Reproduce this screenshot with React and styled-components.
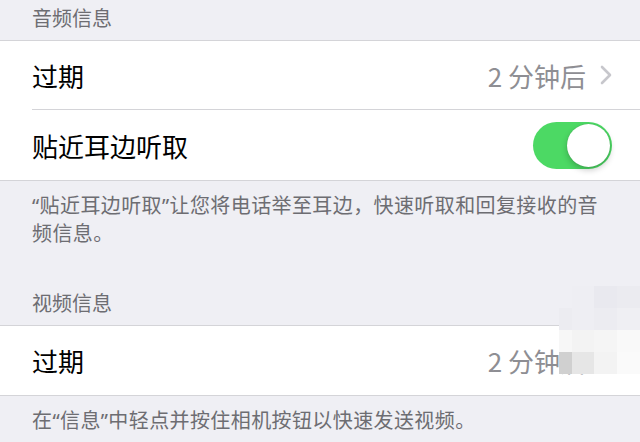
import React from "react"
import styled, { createGlobalStyle } from "styled-components"

const Global = createGlobalStyle`
  html, body { margin: 0; padding: 0; background: #efeff4; }
  body { font-family: "Noto Sans CJK SC", "Noto Sans", sans-serif; }
`;

const Page = styled.div`
  position: relative;
  width: 640px;
  height: 442px;
  overflow: hidden;
  background: #efeff4;
`;

const Header = styled.div`
  padding: ${p => p.$top}px 32px 10px;
  font-size: 20px;
  line-height: 24px;
  color: #6d6d72;
`;

const Group = styled.div`
  background: #fff;
  border-top: 1px solid #d4d4d8;
  border-bottom: 1px solid #d4d4d8;
`;

const Row = styled.div`
  height: ${p => p.$h}px;
  margin-left: 32px;
  padding-right: 28px;
  display: flex;
  align-items: center;
  justify-content: space-between;
  & + & {
    border-top: 1px solid #d4d4d8;
  }
`;

const Title = styled.span`
  font-size: 26px;
  color: #000;
`;

const Value = styled.span`
  display: flex;
  align-items: center;
  gap: 14px;
  font-size: 26px;
  color: #8e8e93;
`;

const Footer = styled.div`
  padding: 11px 32px 0;
  font-family: "Noto Sans", "Noto Sans CJK SC", sans-serif;
  font-size: 20px;
  letter-spacing: 0.4px;
  line-height: 28px;
  color: #6d6d72;
`;

const Toggle = styled.div`
  position: relative;
  width: 79px;
  height: 47px;
  border-radius: 24px;
  background: #4cd964;
`;

const Knob = styled.div`
  position: absolute;
  top: 2px;
  right: 2px;
  width: 43px;
  height: 43px;
  border-radius: 50%;
  background: #fff;
  box-shadow: 0 3px 6px rgba(0, 0, 0, 0.22), 0 0 1px rgba(0, 0, 0, 0.2);
`;

const Mosaic = styled.div`
  position: absolute;
  left: 559px;
  top: 286px;
  display: grid;
  grid-template-columns: 13px 22px 23px 23px;
  grid-auto-rows: 22px;
`;

const Cell = styled.div`
  background: ${p => p.$c};
`;

const Chevron = () => (
  <svg width="12" height="20" viewBox="0 0 12 20">
    <path d="M2 2l8 8-8 8" fill="none" stroke="#c7c7cc" strokeWidth="2.6" strokeLinecap="round" strokeLinejoin="round" />
  </svg>
)

const mosaic = [
  "transparent", "#eeeef3", "#e9e9ef", "#ebebf0",
  "#ececf1", "#eeeef3", "#ececf1", "#efeff3",
  "#f7f7f7", "#f3f3f3", "#f5f5f5", "#f9f9f9",
  "#d0d0d0", "#e6e6e6", "#f3f3f3", "#fafafa",
]

export default function App() {
  return (
    <Page>
      <Global />
      <Header $top={6}>音频信息</Header>
      <Group>
        <Row $h={68}>
          <Title>过期</Title>
          <Value>2 分钟后 <Chevron /></Value>
        </Row>
        <Row $h={70}>
          <Title>贴近耳边听取</Title>
          <Toggle><Knob /></Toggle>
        </Row>
      </Group>
      <Footer>
        “贴近耳边听取”让您将电话举至耳边，快速听取和回复接收的音频信息。
      </Footer>
      <Header $top={43}>视频信息</Header>
      <Group>
        <Row $h={69}>
          <Title>过期</Title>
          <Value>2 分钟后 <Chevron /></Value>
        </Row>
      </Group>
      <Footer>在“信息”中轻点并按住相机按钮以快速发送视频。</Footer>
      <Mosaic>
        {mosaic.map((c, i) => <Cell key={i} $c={c} />)}
      </Mosaic>
    </Page>
  )
}
